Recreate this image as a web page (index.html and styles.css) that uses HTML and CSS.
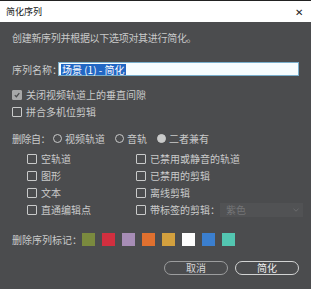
FILE: index.html
```html
<!DOCTYPE html>
<html lang="zh-CN">
<head>
  <meta charset="UTF-8" />
  <title>简化序列</title>
  <link rel="stylesheet" href="styles.css">
</head>
<body>
  <div class="dialog">
    <div class="titlebar">
      <span class="title">简化序列</span>
      <span class="close">✕</span>
    </div>
    <div class="content">
      <p class="intro">创建新序列并根据以下选项对其进行简化。</p>

      <div class="name-row">
        <span class="label">序列名称：</span>
        <div class="name-input"><span class="selected">场景 (1) - 简化</span></div>
      </div>

      <div class="option">
        <span class="box checked">
          <svg width="6" height="6" viewBox="0 0 6 6"><path d="M0.8 3.1 L2.4 4.7 L5.3 1.2" fill="none" stroke="#4c4d4f" stroke-width="1.3"/></svg>
        </span>
        <span>关闭视频轨道上的垂直间隙</span>
      </div>
      <div class="option">
        <span class="box"></span>
        <span>拼合多机位剪辑</span>
      </div>

      <div class="remove-row">
        <span class="remove-label">删除自：</span>
        <span class="radio first"></span><span class="radio-label">视频轨道</span>
        <span class="radio"></span><span class="radio-label">音轨</span>
        <span class="radio on"></span><span class="radio-label">二者兼有</span>
      </div>

      <div class="grid">
        <div class="option"><span class="box"></span><span>空轨道</span></div>
        <div class="option"><span class="box"></span><span>已禁用或静音的轨道</span></div>
        <div class="option"><span class="box"></span><span>图形</span></div>
        <div class="option"><span class="box"></span><span>已禁用的剪辑</span></div>
        <div class="option"><span class="box"></span><span>文本</span></div>
        <div class="option"><span class="box"></span><span>离线剪辑</span></div>
        <div class="option"><span class="box"></span><span>直通编辑点</span></div>
        <div class="option">
          <span class="box"></span><span>带标签的剪辑：</span>
          <div class="select">
            <span>紫色</span>
            <svg width="6" height="4" viewBox="0 0 6 4"><path d="M0.5 0.8 L3 3.2 L5.5 0.8" fill="none" stroke="#6a6b6d" stroke-width="1"/></svg>
          </div>
        </div>
      </div>

      <div class="markers">
        <span class="markers-label">删除序列标记：</span>
        <span class="swatch green"></span>
        <span class="swatch red"></span>
        <span class="swatch violet"></span>
        <span class="swatch orange"></span>
        <span class="swatch gold"></span>
        <span class="swatch white"></span>
        <span class="swatch blue"></span>
        <span class="swatch teal"></span>
      </div>

      <div class="buttons">
        <button class="btn">取消</button>
        <button class="btn primary">简化</button>
      </div>
    </div>
  </div>
</body>
</html>
```

FILE: styles.css
```css
body {
  margin: 0;
  background: #4b4c4e;
  font-family: "Noto Sans CJK SC", "Noto Sans", sans-serif;
  font-size: 10px;
  color: #c9caca;
}

.dialog {
  width: 311px;
  height: 289px;
  background: #4b4c4e;
  overflow: hidden;
}

.titlebar {
  height: 22px;
  background: #fff;
  border-top: 1px solid #222;
  box-sizing: border-box;
  display: flex;
  align-items: center;
  justify-content: space-between;
  padding: 0 8px 0 6px;
}

.title {
  font-size: 9px;
  color: #111;
}

.close {
  font-size: 10px;
  color: #222;
}

.content {
  padding: 0 12px;
}

.intro {
  margin: 9px 0 0;
  line-height: 14px;
  letter-spacing: -0.3px;
}

.name-row {
  display: flex;
  align-items: center;
  margin-top: 17px;
  height: 14px;
}

.label {
  width: 46px;
  white-space: nowrap;
}

.name-input {
  flex: 1;
  height: 14px;
  box-sizing: border-box;
  border: 1px solid #78aecb;
  background: #f6fcfe;
  display: flex;
  align-items: center;
  padding-left: 2px;
}

.selected {
  background: #2267c4;
  color: #fff;
  line-height: 11px;
  padding: 0 1px;
}

.option {
  display: flex;
  align-items: center;
  height: 17px;
  white-space: nowrap;
}

.name-row + .option {
  margin-top: 10px;
}

.box {
  width: 8px;
  height: 8px;
  border: 1px solid #c9caca;
  border-radius: 1px;
  margin-right: 4px;
  display: flex;
  align-items: center;
  justify-content: center;
  flex-shrink: 0;
}

.box.checked {
  background: #a7a8a9;
  border-color: #a7a8a9;
}

.remove-row {
  display: flex;
  align-items: center;
  height: 17px;
  margin-top: 10px;
}

.remove-label {
  width: 41px;
  white-space: nowrap;
  letter-spacing: -0.5px;
}

.radio {
  width: 7px;
  height: 7px;
  border: 1px solid #c9caca;
  border-radius: 50%;
  margin: 0 3px 0 10px;
}

.radio.first {
  margin-left: 0;
}

.radio.on {
  background: #c9caca;
}

.grid {
  display: grid;
  grid-template-columns: 109px 1fr;
  padding-left: 15px;
  margin-top: 3px;
}

.select {
  margin-left: auto;
  width: 83px;
  height: 14px;
  box-sizing: border-box;
  background: #515254;
  display: flex;
  align-items: center;
  justify-content: space-between;
  padding: 0 4px 0 6px;
  color: #747577;
}

.markers {
  display: flex;
  align-items: center;
  margin-top: 14px;
  height: 14px;
}

.markers-label {
  width: 70px;
}

.swatch {
  width: 13px;
  height: 13px;
  margin-right: 7px;
}

.green { background: #7a8a3e; }
.red { background: #d12f3f; }
.violet { background: #a78db6; }
.orange { background: #e0702f; }
.gold { background: #d3a03e; }
.white { background: #fdfdfd; }
.blue { background: #3b7fcf; }
.teal { background: #53c6b1; }

.buttons {
  display: flex;
  justify-content: flex-end;
  gap: 7px;
  margin-top: 15px;
}

.btn {
  width: 64px;
  height: 14px;
  box-sizing: border-box;
  border: 1px solid #9c9d9e;
  border-radius: 7px;
  background: transparent;
  color: #d6d6d6;
  font-family: inherit;
  font-size: 10px;
  line-height: 10px;
  padding: 0;
}

.btn.primary {
  border-color: #d2d3d3;
  color: #eee;
}
```
